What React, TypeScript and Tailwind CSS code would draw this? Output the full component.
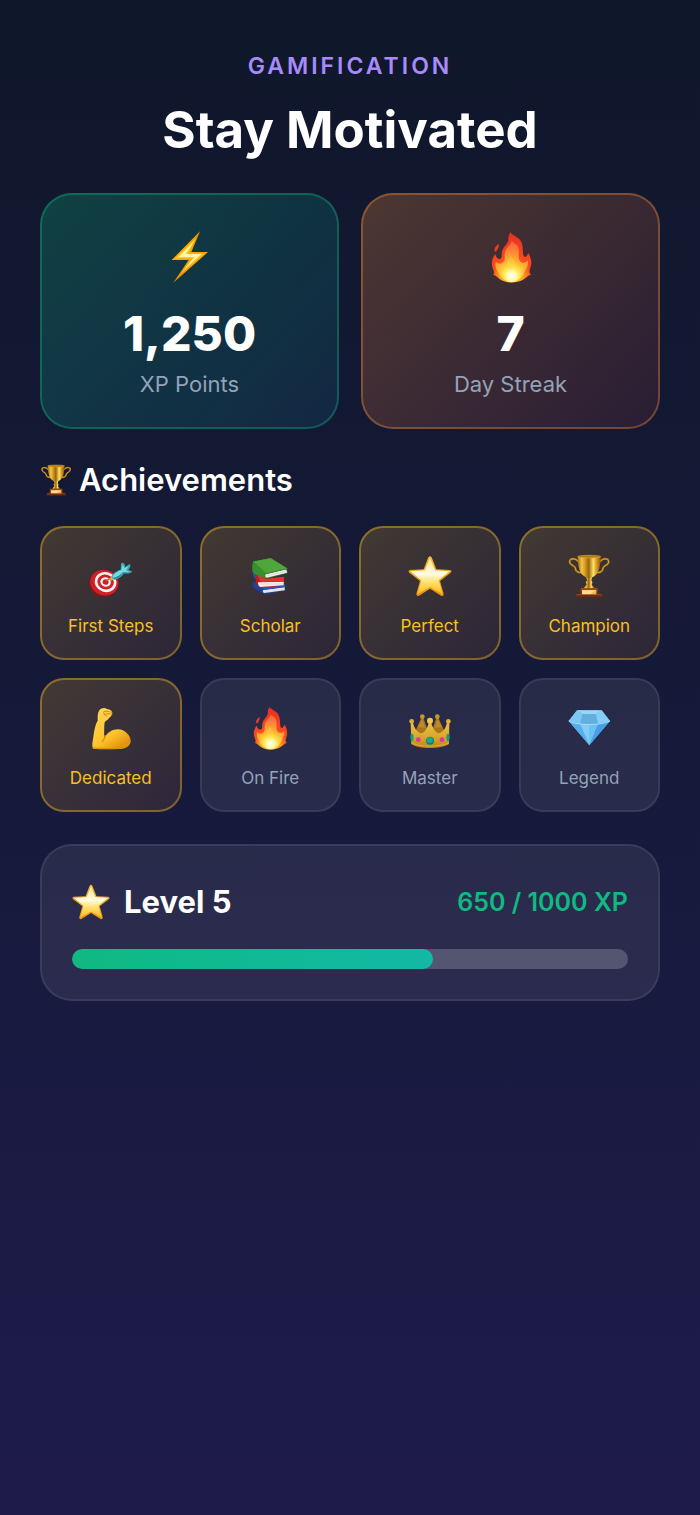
import React from 'react';

type IconProps = { className?: string };

const Bolt: React.FC<IconProps> = ({ className }) => (
  <svg viewBox="42 63 156 156" className={className} aria-hidden="true">
    <defs>
      <linearGradient id="boltEdge" x1="0" y1="0" x2="0" y2="1">
        <stop offset="0" stopColor="#f59300" />
        <stop offset="0.5" stopColor="#ffa800" />
        <stop offset="1" stopColor="#f08a00" />
      </linearGradient>
    </defs>
    <path d="M150 64 L65 150 H116 L70 218 L174 126 H124 Z" fill="url(#boltEdge)" />
    <path d="M138 84 L75 145 H127 L92 192 L161 131 H114 Z" fill="#ffcb1f" />
    <path d="M133 92 L86 141 H134 L104 176 L154 132 H107 Z" fill="#fff5b0" />
  </svg>
);

const Fire: React.FC<IconProps> = ({ className }) => (
  <svg viewBox="44 63 156 156" className={className} aria-hidden="true">
    <defs>
      <radialGradient id="fireOuter" gradientUnits="userSpaceOnUse" cx="124" cy="200" r="120">
        <stop offset="0" stopColor="#ffe04a" />
        <stop offset="0.3" stopColor="#ff9a20" />
        <stop offset="0.48" stopColor="#f94c20" />
        <stop offset="1" stopColor="#e93320" />
      </radialGradient>
      <radialGradient id="fireInner" gradientUnits="userSpaceOnUse" cx="124" cy="200" r="108">
        <stop offset="0" stopColor="#fffde0" />
        <stop offset="0.22" stopColor="#ffe84a" />
        <stop offset="0.45" stopColor="#ffb02e" />
        <stop offset="0.75" stopColor="#ff7f3a" />
        <stop offset="1" stopColor="#fb5c34" />
      </radialGradient>
      <radialGradient id="fireCore" gradientUnits="userSpaceOnUse" cx="124" cy="198" r="34">
        <stop offset="0" stopColor="#ffffff" />
        <stop offset="0.4" stopColor="#fffbb0" />
        <stop offset="1" stopColor="#ffe640" stopOpacity="0" />
      </radialGradient>
    </defs>
    <path
      d="M120 66 C124 76 142 79 151 92 C160 107 156 126 160 138 C164 144 172 139 173 128 C181 140 186 157 181 170 C178 182 174 189 183 194 C173 195 168 204 158 209 C139 220 108 220 91 209 C82 204 77 195 68 194 C75 188 68 180 66 170 C62 157 67 141 75 132 C77 142 82 149 90 146 C98 142 91 132 97 119 C103 106 117 99 114 83 C114 76 118 74 120 66 Z"
      fill="url(#fireOuter)"
    />
    <path d="M84 101 C88 112 81 119 76 126 C68 119 75 110 84 101 Z" fill="#e63b26" />
    <path
      d="M124 92 C130 99 144 103 145 118 C147 132 141 148 152 157 C160 161 168 157 172 151 C176 166 168 174 163 184 C158 200 145 214 124 214 C101 214 89 201 84 187 C78 178 72 169 77 155 C84 163 95 163 101 154 C106 143 100 133 106 122 C111 110 122 105 124 92 Z"
      fill="url(#fireInner)"
    />
    <path
      d="M122 132 C122 143 133 149 133 160 C134 169 142 174 150 170 C149 182 156 190 148 201 C143 211 134 214 124 214 C113 214 101 210 96 201 C89 192 91 181 97 175 C105 176 112 171 112 161 C110 151 120 144 122 132 Z"
      fill="#ffd942"
      opacity="0.45"
    />
    <circle cx="124" cy="190" r="27" fill="url(#fireCore)" />
  </svg>
);

const Trophy: React.FC<IconProps> = ({ className }) => (
  <svg viewBox="22 27 132 132" className={className} aria-hidden="true">
    <defs>
      <linearGradient id="cupGold" x1="0" y1="0" x2="1" y2="0">
        <stop offset="0" stopColor="#a66b0c" />
        <stop offset="0.18" stopColor="#f1c644" />
        <stop offset="0.32" stopColor="#d49a22" />
        <stop offset="0.48" stopColor="#9a6408" />
        <stop offset="0.68" stopColor="#ffe16a" />
        <stop offset="0.82" stopColor="#d69b22" />
        <stop offset="1" stopColor="#8b5507" />
      </linearGradient>
      <linearGradient id="cupBase" x1="0" y1="0" x2="0" y2="1">
        <stop offset="0" stopColor="#a4521a" />
        <stop offset="1" stopColor="#6d260b" />
      </linearGradient>
    </defs>
    <g fill="none" strokeLinecap="round">
      <path d="M55 49 C48 39 31 39 30 49 C29 62 46 60 47 70 C48 79 55 83 66 83" stroke="#9b6712" strokeWidth="6" />
      <path d="M55 49 C48 39 31 39 30 49 C29 62 46 60 47 70 C48 79 55 83 66 83" stroke="#e3ae35" strokeWidth="3" />
      <path d="M122 49 C129 39 146 39 147 49 C148 62 131 60 130 70 C129 79 122 83 111 83" stroke="#9b6712" strokeWidth="6" />
      <path d="M122 49 C129 39 146 39 147 49 C148 62 131 60 130 70 C129 79 122 83 111 83" stroke="#e3ae35" strokeWidth="3" />
    </g>
    <path d="M54 35 C55 63 58 86 78 97 H99 C119 86 122 63 123 35 Z" fill="url(#cupGold)" />
    <ellipse cx="88.5" cy="35" rx="34.5" ry="4" fill="#b67c16" stroke="#d9a52f" strokeWidth="2" />
    <path d="M79 97 H98 L95 106 L99 112 L96 119 L105 129 H72 L81 119 L78 112 L82 106 Z" fill="url(#cupGold)" />
    <path d="M64 129 H113 L117 150 H60 Z" fill="url(#cupBase)" />
    <path d="M50 149 H127 L129 157 H48 Z" fill="#6d280d" />
    <path d="M50 149 H127" stroke="#aa5c24" strokeWidth="2" />
    <rect x="67" y="135" width="43" height="13" fill="#e9b956" />
    <path d="M68 136 H108 L92 147 H68 Z" fill="#ffdc93" />
  </svg>
);

const Target: React.FC<IconProps> = ({ className }) => (
  <svg viewBox="26 24 132 132" className={className} aria-hidden="true">
    <g transform="rotate(18 72 110)">
      <ellipse cx="70" cy="114" rx="43" ry="39" fill="#8c1217" />
      <ellipse cx="72" cy="110" rx="43" ry="38" fill="#cf1f28" />
      <ellipse cx="75" cy="107" rx="33" ry="30" fill="#f7f1f0" />
      <ellipse cx="75" cy="107" rx="25" ry="22" fill="#cf1f28" />
      <ellipse cx="75" cy="107" rx="16" ry="14" fill="#f9f4f2" />
      <ellipse cx="75" cy="107" rx="9" ry="8" fill="#cf1f28" />
    </g>
    <path d="M77 105 L96 93" stroke="#9d6a1c" strokeWidth="4" strokeLinecap="round" />
    <path d="M87 99 L95 91 L101 99 L93 104 Z" fill="#e8b335" />
    <path d="M93 92 C97 82 110 73 121 71 L122 53 C127 46 134 52 135 63 L147 54 C154 58 148 68 143 72 L156 76 C152 84 138 83 131 82 C125 93 112 101 100 101 Z" fill="#37a9b7" />
    <path d="M97 91 C102 83 115 75 123 73 L127 55 L132 67 L145 60 L137 73 L148 78 L129 78 C120 88 109 94 98 95 Z" fill="#75dbe0" />
    <path d="M101 98 C112 94 121 88 130 79" fill="none" stroke="#217c8b" strokeWidth="3" />
  </svg>
);

const Books: React.FC<IconProps> = ({ className }) => (
  <svg viewBox="24 24 132 132" className={className} aria-hidden="true">
    <path d="M38 109 L52 105 L74 131 L135 122 V134 L72 145 C60 139 45 129 38 123 Z" fill="#203f98" />
    <path d="M70 132 L134 124 V133 L73 141 C68 139 67 135 70 132 Z" fill="#e4e3e6" />
    <path d="M56 120 L130 108 L137 122 L73 131 Z" fill="#2957bd" />
    <path d="M39 78 L48 82 L52 104 L46 100 L39 88 Z" fill="#2450ad" />
    <path d="M48 78 L60 76 L79 105 L132 97 V119 L61 125 C51 120 47 112 47 100 Z" fill="#b91b22" />
    <path d="M54 109 L131 107 V118 L61 123 C56 121 54 116 54 109 Z" fill="#f0eeec" />
    <path d="M49 82 L62 108 L132 106 V92 L76 98 L58 77 Z" fill="#e33132" />
    <path d="M62 114 H130" stroke="#bdb9b8" strokeWidth="1" />
    <path d="M38 78 C35 70 37 55 40 47 L64 65 L78 91 L143 74 V82 L80 98 C66 92 48 86 38 78 Z" fill="#2a7b27" />
    <path d="M76 85 L139 70 L141 80 L80 95 C73 92 73 88 76 85 Z" fill="#efeeed" />
    <path d="M77 90 L140 75" stroke="#b8bab5" strokeWidth="1" />
    <path d="M39 46 L92 36 L144 68 L80 84 C74 86 74 94 80 98 C69 94 51 88 39 80 C37 73 37 55 39 46 Z" fill="#36902c" />
    <path d="M41 47 L92 37 L141 67 L78 81 Z" fill="#4fa63a" />
  </svg>
);

const Star: React.FC<IconProps> = ({ className }) => (
  <svg viewBox="23 26 132 132" className={className} aria-hidden="true">
    <defs>
      <linearGradient id="starEdge" x1="0" y1="0" x2="0" y2="1">
        <stop offset="0" stopColor="#f5b53a" />
        <stop offset="1" stopColor="#e8920f" />
      </linearGradient>
      <linearGradient id="starFace" x1="0" y1="0" x2="0" y2="1">
        <stop offset="0" stopColor="#ffe88c" />
        <stop offset="0.45" stopColor="#fffbe0" />
        <stop offset="0.68" stopColor="#ffe068" />
        <stop offset="1" stopColor="#fdb822" />
      </linearGradient>
    </defs>
    <path
      d="M84 36 Q89 29 94 36 L108 72 L149 74 Q157 77 150 83 L119 107 L130 145 Q130 154 122 151 L89 130 L56 151 Q48 154 48 145 L59 107 L28 83 Q21 77 29 74 L70 72 Z"
      fill="url(#starEdge)"
    />
    <path d="M89 37 L104 75 L148 78 L115 105 L127 147 L89 125 L51 147 L63 105 L30 78 L74 75 Z" fill="url(#starFace)" />
  </svg>
);

const Muscle: React.FC<IconProps> = ({ className }) => (
  <svg viewBox="28 24 132 132" className={className} aria-hidden="true">
    <defs>
      <linearGradient id="armSkin" x1="0" y1="0" x2="0.6" y2="1">
        <stop offset="0" stopColor="#ffd958" />
        <stop offset="0.7" stopColor="#ffc32e" />
        <stop offset="1" stopColor="#e29610" />
      </linearGradient>
    </defs>
    <path
      d="M59 37 C65 30 75 28 82 33 C91 34 98 39 98 45 C98 51 93 56 88 60 C86 65 77 68 75 73 C73 84 74 104 73 124 C81 103 98 94 115 94 C136 95 151 111 153 127 C154 143 140 152 121 153 C98 154 61 154 40 152 C36 144 39 129 41 117 C44 98 47 78 54 68 C54 57 53 46 59 37 Z"
      fill="url(#armSkin)"
    />
    <path d="M76 112 C77 119 73 125 68 131" fill="none" stroke="#dc920d" strokeWidth="4" strokeLinecap="round" />
    <path d="M73 41 C80 38 88 41 96 43 M74 49 C82 45 88 48 97 49 M73 41 C70 48 75 53 82 54" fill="none" stroke="#b96f0b" strokeWidth="2" strokeLinecap="round" />
    <path d="M41 150 C75 153 109 152 135 149" fill="none" stroke="#da8d10" strokeWidth="3" strokeLinecap="round" />
  </svg>
);

const Crown: React.FC<IconProps> = ({ className }) => (
  <svg viewBox="23 27 132 132" className={className} aria-hidden="true">
    <defs>
      <linearGradient id="crownGold" x1="0" y1="0" x2="0" y2="1">
        <stop offset="0" stopColor="#edc344" />
        <stop offset="0.6" stopColor="#d9a62c" />
        <stop offset="1" stopColor="#b98218" />
      </linearGradient>
    </defs>
    <path d="M38 118 L63 62 H69 L84 105 L94 105 L108 62 H114 L139 118 Z" fill="#a8741c" />
    <path d="M53 91 L66 65 L75 92 Z M104 92 L111 65 L126 91 Z" fill="#bd8a27" />
    <circle cx="66" cy="59" r="7" fill="#c9952d" />
    <circle cx="111" cy="59" r="7" fill="#c9952d" />
    <path
      d="M31 77 H38 C41 90 48 103 61 109 C76 107 82 90 86 74 H92 C96 90 103 107 117 109 C131 103 137 90 140 77 H147 L146 141 C123 157 54 157 33 141 Z"
      fill="url(#crownGold)"
    />
    <circle cx="34" cy="73" r="7" fill="#e0b03a" />
    <circle cx="144" cy="73" r="7" fill="#e0b03a" />
    <circle cx="89" cy="71" r="9" fill="#f3c94b" />
    <path d="M33 137 C56 151 122 151 146 137" fill="none" stroke="#ecc04a" strokeWidth="2" />
    <circle cx="89" cy="131" r="12" fill="#07866d" />
    <circle cx="88" cy="129" r="9" fill="#20a985" />
    <circle cx="54" cy="128" r="7" fill="#d936a6" />
    <circle cx="125" cy="128" r="7" fill="#d936a6" />
    <ellipse cx="35" cy="121" rx="5" ry="11" fill="#149c7f" />
    <ellipse cx="143" cy="121" rx="5" ry="11" fill="#149c7f" />
  </svg>
);

const Diamond: React.FC<IconProps> = ({ className }) => (
  <svg viewBox="22 28 132 132" className={className} aria-hidden="true">
    <path d="M52 41 H126 L151 73 L89 146 L27 73 Z" fill="#52aeea" />
    <path d="M52 41 L69 52 L62 83 L27 73 Z" fill="#7cc8f2" />
    <path d="M52 41 H126 L109 52 H69 Z" fill="#9ad6f6" />
    <path d="M69 52 H109 L115 83 H62 Z" fill="#62aede" />
    <path d="M126 41 L151 73 L115 83 L109 52 Z" fill="#86cef6" />
    <path d="M27 73 L62 83 L89 146 Z" fill="#55aeec" />
    <path d="M62 83 H115 L89 146 Z" fill="#82ccf8" />
    <path d="M88 83 H115 L89 146 Z" fill="#6cc0f4" />
    <path d="M151 73 L115 83 L89 146 Z" fill="#459fe4" />
    <path d="M27 73 C48 87 129 87 151 73" fill="none" stroke="#a4dcf9" strokeWidth="3" />
  </svg>
);

const stats = [
  {
    icon: Bolt,
    value: '1,250',
    label: 'XP Points',
    style: 'border-[rgba(16,185,129,0.35)] from-[rgba(16,185,129,0.26)] to-[rgba(20,150,180,0.12)]',
  },
  {
    icon: Fire,
    value: '7',
    label: 'Day Streak',
    style: 'border-[rgba(251,146,60,0.35)] from-[rgba(251,146,60,0.26)] to-[rgba(239,68,68,0.1)]',
  },
];

const achievements = [
  { icon: Target, label: 'First Steps', unlocked: true },
  { icon: Books, label: 'Scholar', unlocked: true },
  { icon: Star, label: 'Perfect', unlocked: true },
  { icon: Trophy, label: 'Champion', unlocked: true },
  { icon: Muscle, label: 'Dedicated', unlocked: true },
  { icon: Fire, label: 'On Fire', unlocked: false },
  { icon: Crown, label: 'Master', unlocked: false },
  { icon: Diamond, label: 'Legend', unlocked: false },
];

const level = { current: 5, xp: 650, max: 1000 };

const App: React.FC = () => {
  const percent = (level.xp / level.max) * 100;

  return (
    <main className="min-h-screen bg-linear-to-b from-[#0f172a] to-[#1e1b4b] px-10 pt-[50px] pb-12 font-['Inter',sans-serif] text-white">
      <header className="text-center">
        <p className="text-[23px] leading-8 font-semibold tracking-[3px] text-[#a78bfa]">GAMIFICATION</p>
        <h1 className="mt-4 text-[51px] leading-16 font-bold">Stay Motivated</h1>
      </header>

      <section className="mt-[31px] grid grid-cols-2 gap-[22px]">
        {stats.map(({ icon: Icon, value, label, style }) => (
          <div
            key={label}
            className={`flex flex-col items-center rounded-[32px] border-2 bg-linear-135 bg-origin-border pt-9 pb-7 ${style}`}
          >
            <Icon className="size-[52px]" />
            <span className="mt-6 text-5xl leading-[54px] font-extrabold">{value}</span>
            <span className="mt-2 text-[22px] leading-[30px] text-[#94a3b8]">{label}</span>
          </div>
        ))}
      </section>

      <section>
        <h2 className="mt-8 flex items-center gap-[7px] text-[31px] leading-[38px] font-semibold">
          <Trophy className="size-8" />
          Achievements
        </h2>
        <ul className="mt-[27px] grid grid-cols-4 gap-[18px]">
          {achievements.map(({ icon: Icon, label, unlocked }) => (
            <li
              key={label}
              className={`flex flex-col items-center rounded-3xl border-2 pt-[26px] pb-5 ${
                unlocked
                  ? 'border-[rgba(251,191,36,0.4)] bg-linear-135 from-[rgba(251,191,36,0.2)] to-[rgba(251,146,60,0.1)] bg-origin-border text-[#fbbf24]'
                  : 'border-white/8 bg-white/8 text-[#94a3b8]'
              }`}
            >
              <Icon className="size-11" />
              <span className="mt-4 text-[17px] leading-6">{label}</span>
            </li>
          ))}
        </ul>
      </section>

      <section className="mt-8 rounded-[32px] border-2 border-white/8 bg-white/8 p-[30px]">
        <div className="flex h-[52px] items-center justify-between">
          <h2 className="flex items-center gap-[14px] text-[31px] leading-10 font-bold">
            <Star className="size-[38px]" />
            Level {level.current}
          </h2>
          <span className="text-[25px] leading-8 font-semibold text-[#10b981]">
            {level.xp} / {level.max} XP
          </span>
        </div>
        <div
          role="progressbar"
          aria-label="Level progress"
          aria-valuenow={level.xp}
          aria-valuemin={0}
          aria-valuemax={level.max}
          className="mt-[21px] h-5 overflow-hidden rounded-full bg-white/20"
        >
          <div
            className="h-full rounded-full bg-linear-to-r from-[#10b981] to-[#14b8a6]"
            style={{ width: `${percent}%` }}
          />
        </div>
      </section>
    </main>
  );
};

export default App;
